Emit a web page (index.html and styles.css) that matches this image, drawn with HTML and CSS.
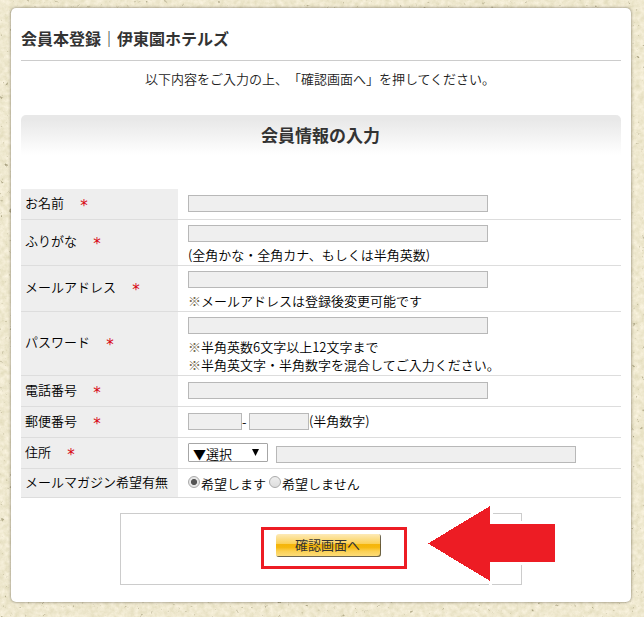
FILE: index.html
```html
<!DOCTYPE html>
<html lang="ja">
<head>
<meta charset="utf-8">
<title>会員本登録｜伊東園ホテルズ</title>
<link rel="stylesheet" href="styles.css">
</head>
<body>
<svg class="paper" width="644" height="617" aria-hidden="true">
  <filter id="grain" x="0" y="0" width="100%" height="100%" color-interpolation-filters="sRGB">
    <feTurbulence type="fractalNoise" baseFrequency="0.2" numOctaves="4" seed="8"/>
    <feColorMatrix values="0.12 0 0 0 0.876  0.12 0 0 0 0.851  0.18 0 0 0 0.722  0 0 0 0 1"/>
  </filter>
  <filter id="flecks" x="0" y="0" width="100%" height="100%" color-interpolation-filters="sRGB">
    <feTurbulence type="fractalNoise" baseFrequency="0.22" numOctaves="3" seed="21"/>
    <feColorMatrix values="0 0 0 0 0.66  0 0 0 0 0.63  0 0 0 0 0.5  6 0 0 0 -4.3"/>
  </filter>
  <rect width="644" height="617" filter="url(#grain)"/>
  <rect width="644" height="617" filter="url(#flecks)"/>
</svg>
<main class="panel">
  <h1 class="title">会員本登録｜伊東園ホテルズ</h1>
  <p class="lead">以下内容をご入力の上、「確認画面へ」を押してください。</p>
  <h2 class="heading">会員情報の入力</h2>
  <form class="form">
    <div class="row">
      <div class="label">お名前<span class="req">*</span></div>
      <div class="field"><input class="text" type="text"></div>
    </div>
    <div class="row noted">
      <div class="label">ふりがな<span class="req">*</span></div>
      <div class="field"><input class="text" type="text"><p class="note">(全角かな・全角カナ、もしくは半角英数)</p></div>
    </div>
    <div class="row noted">
      <div class="label">メールアドレス<span class="req">*</span></div>
      <div class="field"><input class="text" type="text"><p class="note"><span class="mark">※</span>メールアドレスは登録後変更可能です</p></div>
    </div>
    <div class="row noted tall">
      <div class="label">パスワード<span class="req">*</span></div>
      <div class="field"><input class="text" type="password"><p class="note"><span class="mark">※</span>半角英数6文字以上12文字まで<br><span class="mark">※</span>半角英文字・半角数字を混合してご入力ください。</p></div>
    </div>
    <div class="row">
      <div class="label">電話番号<span class="req">*</span></div>
      <div class="field"><input class="text" type="text"></div>
    </div>
    <div class="row">
      <div class="label">郵便番号<span class="req">*</span></div>
      <div class="field line"><input class="text zip-a" type="text"><span class="dash">-</span><input class="text zip-b" type="text"><span class="unit">(半角数字)</span></div>
    </div>
    <div class="row address">
      <div class="label">住所<span class="req">*</span></div>
      <div class="field line">
        <div class="select"><span>▼選択</span><svg width="7" height="7"><path d="M0 0H7L3.5 7Z"/></svg></div>
        <input class="text street" type="text">
      </div>
    </div>
    <div class="row last">
      <div class="label">メールマガジン希望有無</div>
      <div class="field line"><i class="radio on"></i><span class="choice">希望します</span><i class="radio"></i><span class="choice">希望しません</span></div>
    </div>
  </form>
  <div class="submit">
    <button class="button" type="button">確認画面へ</button>
    <div class="frame"></div>
    <svg class="arrow" width="130" height="78" viewBox="426 505 130 78" shape-rendering="crispEdges">
      <path fill="#fff" d="M471 512H493V515H471ZM520 521H523V565H520ZM489 583H492V586H489Z"/>
      <path fill="#ed1c24" d="M428 543.5L490 506V524H555V562H490V581Z"/>
    </svg>
  </div>
</main>
</body>
</html>
```
FILE: styles.css
```css
* { box-sizing: border-box; }

body {
  margin: 0;
  padding: 8px 13px 0 11px;
  height: 617px;
  overflow: hidden;
  background: #eee8ce;
  color: #000;
  font: 350 13px/18px "Noto Sans CJK JP DemiLight", "Noto Sans CJK JP", sans-serif;
  text-spacing-trim: space-all;
}

h1, h2, p { margin: 0; }

.paper {
  position: absolute;
  inset: 0;
  z-index: -1;
}

.panel {
  height: 594px;
  padding: 0 10px;
  background: #fff;
  border-radius: 5px;
  box-shadow: 0 0 3px rgba(80, 75, 60, .75);
}

.title {
  height: 53px;
  padding-top: 18px;
  border-bottom: 1px solid #ccc;
  color: #333;
  font-family: "Noto Sans CJK JP", sans-serif;
  font-size: 16px;
  line-height: 24px;
  font-weight: 700;
}

.lead {
  padding: 9px 2px 0 0;
  height: 54px;
  color: #222;
  text-align: center;
}

.heading {
  height: 40px;
  margin-bottom: 34px;
  padding-right: 1px;
  border-radius: 5px 5px 0 0;
  background: linear-gradient(#e8e8e8 0, #e8e8e8 4px, #fff 100%);
  color: #333;
  font-family: "Noto Sans CJK JP", sans-serif;
  font-size: 17px;
  line-height: 39px;
  font-weight: 700;
  text-align: center;
}

.row {
  display: flex;
  height: 31px;
  border-bottom: 1px solid #ddd;
}

.noted { height: 46px; }
.tall { height: 64px; }
.last { height: 29px; }

.label {
  display: flex;
  align-items: center;
  width: 157px;
  padding: 0 0 2px 4px;
  background: #eee;
  white-space: nowrap;
}

.noted .label { padding-bottom: 4px; }

.req {
  width: 13px;
  height: 18px;
  margin-left: 13px;
  padding: 3px 0 0 1px;
  color: #d7000f;
  font: 400 15px/18px "DejaVu Sans", sans-serif;
  text-align: center;
}

.field {
  flex: 1;
  padding: 6px 0 0 10px;
}

.noted .field { padding-top: 5px; }

.line {
  display: flex;
  align-items: flex-start;
}

.text {
  display: block;
  width: 300px;
  height: 17px;
  padding: 0;
  border: 1px solid #b8b8b8;
  border-radius: 0;
  background: #efefef;
}

.zip-a { width: 54px; }
.zip-b { width: 60px; }

.dash { width: 7px; }

.unit { margin: -1px 0 0; }

.note { margin-top: 4px; }

.mark { color: #756b50; }

.address .field { padding-top: 5px; }

.select {
  display: flex;
  align-items: center;
  justify-content: space-between;
  width: 80px;
  height: 19px;
  padding: 2px 8px 0 4px;
  border: 1px solid #a6a6a6;
  border-radius: 1px;
  background: #fff;
  line-height: 16px;
}

.select svg { margin-bottom: 3px; }

.street { margin: 3px 0 0 8px; }

.radio {
  width: 12px;
  height: 12px;
  margin: 1px 1px 0 0;
  border: 1px solid #aaa;
  border-radius: 50%;
  background: linear-gradient(#eee, #ddd);
}

.radio.on { background: radial-gradient(circle, #555 0 2.7px, #e6e6e6 3.4px); }

.choice { margin-right: 3px; }

.submit {
  position: relative;
  width: 402px;
  height: 72px;
  margin: 15px 0 0 99px;
  padding: 20px 0 0 155px;
  border: 1px solid #ccc;
}

.button {
  display: block;
  width: 105px;
  height: 23px;
  padding: 0 2px 1px 0;
  border: 0;
  border-radius: 3px;
  background: linear-gradient(#fdeab8 0, #fbd158 42%, #f5b50b 44%, #f6b80e 58%, #fbd052 74%, #fddf80 100%);
  box-shadow: inset -1px -1px 0 rgba(60, 60, 60, .75);
  color: #333;
  font: 400 13px/22px "Noto Sans CJK JP", sans-serif;
}

.frame {
  position: absolute;
  left: 140px;
  top: 13px;
  width: 146px;
  height: 42px;
  border: 3px solid #ed1c24;
}

.arrow {
  position: absolute;
  left: 305px;
  top: -9px;
  overflow: visible;
}
```
